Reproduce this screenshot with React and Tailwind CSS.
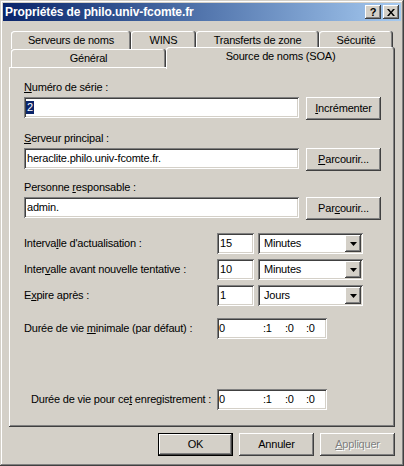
import React from "react";

// classic 3D borders
const raised =
  "shadow-[inset_-1px_-1px_#404040,inset_1px_1px_#ffffff,inset_-2px_-2px_#808080,inset_2px_2px_#d4d0c8]";
const sunken =
  "bg-white shadow-[inset_1px_1px_#808080,inset_-1px_-1px_#ffffff,inset_2px_2px_#404040,inset_-2px_-2px_#d4d0c8]";

function Key({ children }) {
  return <span className="underline underline-offset-[1px]">{children}</span>;
}

function Button({ children, isDefault, disabled }) {
  if (isDefault) {
    return (
      <div className="w-[75px] h-[23px] border border-black">
        <div className={`w-full h-full flex items-center justify-center ${raised}`}>{children}</div>
      </div>
    );
  }
  return (
    <div
      className={`w-[75px] h-[23px] shrink-0 flex items-center justify-center ${raised} ${
        disabled ? "text-[#808080] [text-shadow:1px_1px_0_#ffffff]" : ""
      }`}
    >
      {children}
    </div>
  );
}

function Field({ className, children }) {
  return <div className={`h-[21px] flex items-center shrink-0 ${sunken} ${className}`}>{children}</div>;
}

function Combo({ value }) {
  return (
    <Field className="w-[105px] pl-[6px] relative">
      {value}
      <div className={`absolute right-[2px] top-[2px] w-[16px] h-[17px] bg-[#d4d0c8] flex items-center justify-center ${raised}`}>
        <svg width="7" height="4" viewBox="0 0 7 4">
          <path d="M0 0h7L3.5 4z" fill="#000" />
        </svg>
      </div>
    </Field>
  );
}

function Tab({ children, className }) {
  return (
    <div
      className={`h-[18px] flex items-center justify-center rounded-t-[3px] shrink-0 bg-[#d4d0c8] shadow-[inset_-1px_0_#404040,inset_1px_1px_#ffffff,inset_-2px_0_#808080] ${className}`}
    >
      {children}
    </div>
  );
}

function Duration() {
  return (
    <Field className="w-[110px] pl-[2px]">
      <span className="w-[44px]">0</span>
      <span className="w-[22px]">:1</span>
      <span className="w-[21px]">:0</span>
      <span>:0</span>
    </Field>
  );
}

export default function App() {
  return (
    <div className="w-[404px] h-[466px] p-[3px] bg-[#d4d0c8] text-black text-[11px] leading-[13px] tracking-[-0.2px] font-['Liberation_Sans',Arial,sans-serif] shadow-[inset_-1px_-1px_#404040,inset_1px_1px_#d4d0c8,inset_-2px_-2px_#808080,inset_2px_2px_#ffffff]">
      {/* title bar */}
      <div className="h-[18px] flex items-center justify-between pl-[2px] pr-[2px] bg-gradient-to-r from-[#0a246a] to-[#a6caf0]">
        <span className="text-white font-bold text-[12px] tracking-[-0.1px]">Propriétés de philo.univ-fcomte.fr</span>
        <div className="flex gap-[2px]">
          <div className={`w-[16px] h-[14px] bg-[#d4d0c8] flex items-center justify-center font-bold text-[11px] leading-none tracking-normal ${raised}`}>
            ?
          </div>
          <div className={`w-[16px] h-[14px] bg-[#d4d0c8] flex items-center justify-center ${raised}`}>
            <svg width="8" height="7" viewBox="0 0 8 7">
              <path d="M0 0h2l2 2.5L6 0h2L5 3.5 8 7H6L4 4.5 2 7H0l3-3.5z" fill="#000" />
            </svg>
          </div>
        </div>
      </div>

      <div className="px-[6px] mt-[10px]">
        {/* tabs */}
        <div className="flex pl-[2px] h-[18px]">
          <Tab className="w-[120px]">Serveurs de noms</Tab>
          <Tab className="w-[65px]">WINS</Tab>
          <Tab className="w-[123px]">Transferts de zone</Tab>
          <Tab className="w-[74px]">Sécurité</Tab>
        </div>
        <div className="flex pl-[2px] h-[18px]">
          <Tab className="w-[155px] pt-[1px]">Général</Tab>
          <div className="relative z-10 -mt-[2px] w-[229px] h-[22px] pb-[3px] flex items-center justify-center rounded-t-[3px] bg-[#d4d0c8] shadow-[inset_-1px_0_#404040,inset_1px_1px_#ffffff,inset_-2px_0_#808080]">
            Source de noms (SOA)
          </div>
        </div>

        {/* page */}
        <div className="h-[360px] pt-[14px] pl-[15px] shadow-[inset_-1px_-1px_#404040,inset_1px_1px_#ffffff,inset_-2px_-2px_#808080]">
          <div>
            <Key>N</Key>uméro de série :
          </div>
          <div className="flex items-start gap-[7px] mt-[3px]">
            <Field className="w-[275px] pl-[2px]">
              <span className="bg-[#0a246a] text-white px-[1px]">2</span>
            </Field>
            <Button>
              <Key>I</Key>ncrémenter
            </Button>
          </div>

          <div className="mt-[12px]">
            <Key>S</Key>erveur principal :
          </div>
          <div className="flex items-start gap-[7px] mt-[3px]">
            <Field className="w-[275px] pl-[3px]">heraclite.philo.univ-fcomte.fr.</Field>
            <Button>
              <Key>P</Key>arcourir...
            </Button>
          </div>

          <div className="mt-[10px]">
            Personne <Key>r</Key>esponsable :
          </div>
          <div className="flex items-start gap-[7px] mt-[3px]">
            <Field className="w-[275px] pl-[3px]">admin.</Field>
            <Button>
              Par<Key>c</Key>ourir...
            </Button>
          </div>

          <div className="mt-[13px] flex flex-col gap-[5px]">
            <div className="flex items-center">
              <span className="w-[193px]">
                Interva<Key>l</Key>le d'actualisation :
              </span>
              <Field className="w-[37px] pl-[3px]">15</Field>
              <div className="w-[4px]" />
              <Combo value="Minutes" />
            </div>
            <div className="flex items-center">
              <span className="w-[193px]">
                Inter<Key>v</Key>alle avant nouvelle tentative :
              </span>
              <Field className="w-[37px] pl-[3px]">10</Field>
              <div className="w-[4px]" />
              <Combo value="Minutes" />
            </div>
            <div className="flex items-center">
              <span className="w-[193px]">
                E<Key>x</Key>pire après :
              </span>
              <Field className="w-[37px] pl-[3px]">1</Field>
              <div className="w-[4px]" />
              <Combo value="Jours" />
            </div>
          </div>

          <div className="mt-[12px] flex items-center">
            <span className="w-[193px]">
              Durée de vie <Key>m</Key>inimale (par défaut) :
            </span>
            <Duration />
          </div>

          <div className="mt-[50px] flex items-center pl-[7px]">
            <span className="w-[186px]">
              Durée de vie pour ce<Key>t</Key> enregistrement :
            </span>
            <Duration />
          </div>
        </div>

        {/* dialog buttons */}
        <div className="flex justify-end gap-[6px] mt-[6px]">
          <Button isDefault>OK</Button>
          <Button>Annuler</Button>
          <Button disabled>
            <Key>A</Key>ppliquer
          </Button>
        </div>
      </div>
    </div>
  );
}
